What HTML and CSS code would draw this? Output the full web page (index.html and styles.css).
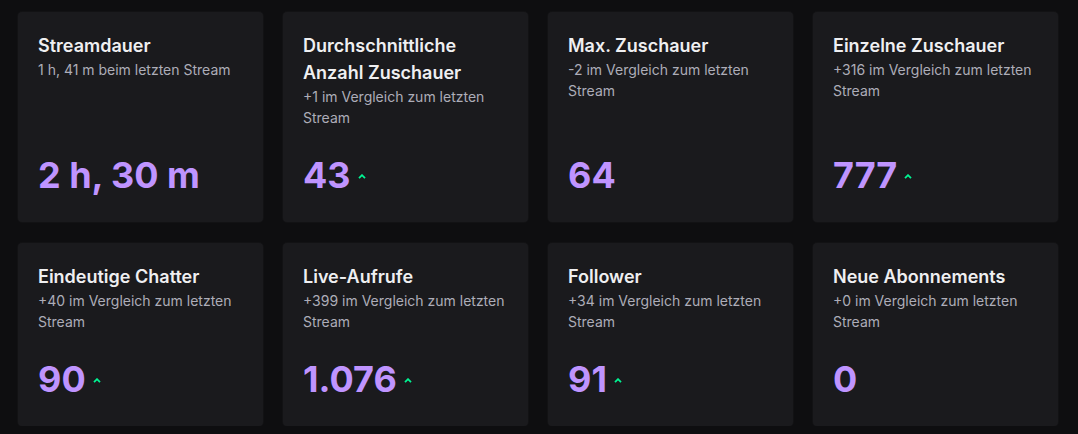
FILE: index.html
```html
<!DOCTYPE html>
<html lang="de">
<head>
<meta charset="utf-8">
<link rel="stylesheet" href="styles.css">
</head>
<body>
<div class="grid">
  <div class="card">
    <div class="title">Streamdauer</div>
    <div class="sub">1 h, 41 m beim letzten Stream</div>
    <div class="value"><span class="num">2 h, 30 m</span></div>
  </div>
  <div class="card">
    <div class="title">Durchschnittliche Anzahl Zuschauer</div>
    <div class="sub">+1 im Vergleich zum letzten Stream</div>
    <div class="value"><span class="num">43</span><svg class="up" viewBox="0 0 8 5" width="8" height="5"><path d="M1 4.2 L4 1.2 L7 4.2" fill="none" stroke="currentColor" stroke-width="1.8"/></svg></div>
  </div>
  <div class="card">
    <div class="title">Max. Zuschauer</div>
    <div class="sub">-2 im Vergleich zum letzten Stream</div>
    <div class="value"><span class="num">64</span></div>
  </div>
  <div class="card">
    <div class="title">Einzelne Zuschauer</div>
    <div class="sub">+316 im Vergleich zum letzten Stream</div>
    <div class="value"><span class="num">777</span><svg class="up" viewBox="0 0 8 5" width="8" height="5"><path d="M1 4.2 L4 1.2 L7 4.2" fill="none" stroke="currentColor" stroke-width="1.8"/></svg></div>
  </div>
  <div class="card">
    <div class="title">Eindeutige Chatter</div>
    <div class="sub">+40 im Vergleich zum letzten Stream</div>
    <div class="value"><span class="num">90</span><svg class="up" viewBox="0 0 8 5" width="8" height="5"><path d="M1 4.2 L4 1.2 L7 4.2" fill="none" stroke="currentColor" stroke-width="1.8"/></svg></div>
  </div>
  <div class="card">
    <div class="title">Live-Aufrufe</div>
    <div class="sub">+399 im Vergleich zum letzten Stream</div>
    <div class="value"><span class="num">1.076</span><svg class="up" viewBox="0 0 8 5" width="8" height="5"><path d="M1 4.2 L4 1.2 L7 4.2" fill="none" stroke="currentColor" stroke-width="1.8"/></svg></div>
  </div>
  <div class="card">
    <div class="title">Follower</div>
    <div class="sub">+34 im Vergleich zum letzten Stream</div>
    <div class="value"><span class="num">91</span><svg class="up" viewBox="0 0 8 5" width="8" height="5"><path d="M1 4.2 L4 1.2 L7 4.2" fill="none" stroke="currentColor" stroke-width="1.8"/></svg></div>
  </div>
  <div class="card">
    <div class="title">Neue Abonnements</div>
    <div class="sub">+0 im Vergleich zum letzten Stream</div>
    <div class="value"><span class="num">0</span></div>
  </div>
</div>
</body>
</html>
```
FILE: styles.css
```css
html, body {
  margin: 0;
  background: #0e0e10;
}
body {
  padding: 12px 20px 0 18px;
  font-family: Inter, "Noto Sans", sans-serif;
}
.grid {
  display: grid;
  grid-template-columns: repeat(4, 245px);
  column-gap: 20px;
  row-gap: 21px;
}
.card {
  background: #1a1a1d;
  border-radius: 4px;
  padding: 20px;
  display: flex;
  flex-direction: column;
  box-shadow: 0 0 0 1px rgba(255,255,255,0.02);
}
.title {
  color: #efeff1;
  font-size: 18px;
  font-weight: 600;
  line-height: 27px;
}
.sub {
  color: #adadb8;
  font-size: 14px;
  line-height: 21px;
  min-height: 42px;
  margin-bottom: 20px;
}
.value {
  margin-top: auto;
  display: flex;
  align-items: center;
  height: 54px;
}
.num {
  color: #bf94ff;
  font-size: 36px;
  font-weight: 700;
  line-height: 54px;
}
.up {
  color: #00f593;
  margin-left: 7px;
  margin-top: 2px;
}
```
